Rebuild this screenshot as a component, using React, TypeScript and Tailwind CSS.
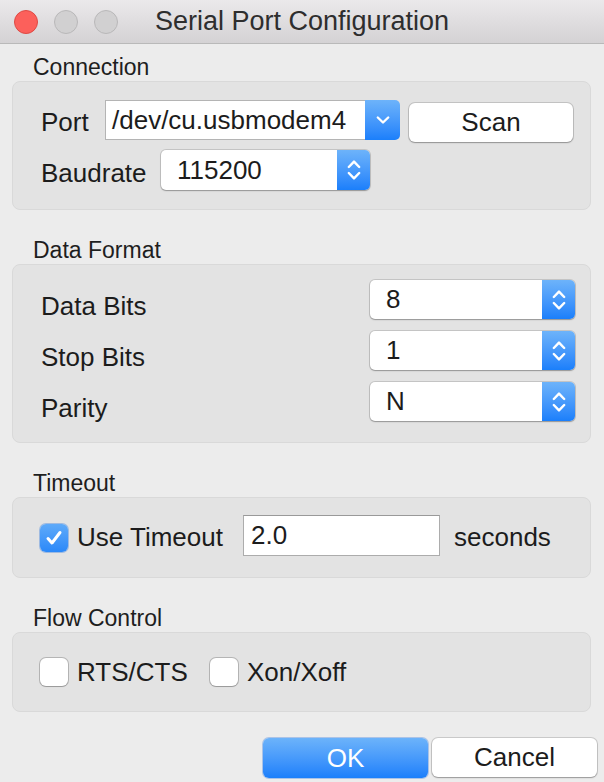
import React from "react";

const UpDown = () => (
  <svg width="14" height="24" viewBox="0 0 14 24" fill="none" stroke="white" strokeWidth="2.4" strokeLinecap="round" strokeLinejoin="round">
    <path d="M1.8 9 L7 3.6 L12.2 9" />
    <path d="M1.8 15 L7 20.4 L12.2 15" />
  </svg>
);

const Down = () => (
  <svg width="14" height="10" viewBox="0 0 14 10" fill="none" stroke="white" strokeWidth="2.4" strokeLinecap="round" strokeLinejoin="round">
    <path d="M1.8 2.5 L7 7.5 L12.2 2.5" />
  </svg>
);

function Popup({ value, w, h }: { value: string; w: string; h: string }) {
  return (
    <div className={`flex ${w} ${h} rounded-[5px] bg-white overflow-hidden shadow-[0_0_0_1px_rgba(0,0,0,0.13),0_1px_1.5px_rgba(0,0,0,0.25)]`}>
      <div className="flex-1 flex items-center pl-[16px] text-[26px] text-[#1c1c1c]">{value}</div>
      <div className="w-[33px] flex items-center justify-center bg-linear-to-b from-[#6db3fa] to-[#1a7ffb]">
        <UpDown />
      </div>
    </div>
  );
}

function Check({ checked }: { checked: boolean }) {
  if (checked) {
    return (
      <div className="w-[28px] h-[28px] rounded-[6px] bg-linear-to-b from-[#5eaaf9] to-[#2a88f9] flex items-center justify-center shadow-[0_0_0_1px_rgba(30,110,220,0.35)]">
        <svg width="20" height="20" viewBox="0 0 20 20" fill="none" stroke="white" strokeWidth="3" strokeLinecap="round" strokeLinejoin="round">
          <path d="M4 10.5 L8 15 L16 4.5" />
        </svg>
      </div>
    );
  }
  return (
    <div className="w-[28px] h-[28px] rounded-[6px] bg-white shadow-[0_0_0_1px_rgba(0,0,0,0.2),0_1px_1px_rgba(0,0,0,0.15)]" />
  );
}

function Button({ label, primary, w }: { label: string; primary?: boolean; w: string }) {
  return primary ? (
    <div className={`${w} h-[40px] rounded-[6px] bg-linear-to-b from-[#6cb3fa] to-[#1a7ffb] text-white text-[26px] flex items-center justify-center shadow-[0_0_0_1px_rgba(20,100,220,0.3)]`}>
      {label}
    </div>
  ) : (
    <div className={`${w} h-[39px] rounded-[6px] bg-white text-[#1c1c1c] text-[26px] flex items-center justify-center shadow-[0_0_0_1px_rgba(0,0,0,0.14),0_1px_1.5px_rgba(0,0,0,0.25)]`}>
      {label}
    </div>
  );
}

function SectionLabel({ children }: { children: React.ReactNode }) {
  return <div className="h-[28px] leading-[28px] pl-[21px] text-[23px] text-[#1e1e1e]">{children}</div>;
}

export default function App() {
  return (
    <div className="w-[604px] h-[782px] bg-[#ececec] flex flex-col overflow-hidden font-['Liberation_Sans',Arial,sans-serif] text-[#1c1c1c]">
      {/* Title bar */}
      <div className="h-[44px] shrink-0 grid grid-cols-[1fr_auto_1fr] items-center border-b border-[#b9b9b9] bg-linear-to-b from-[#ebe9eb] to-[#d4d2d4]">
        <div className="flex items-center gap-[16px] pl-[14px]">
          <div className="w-[24px] h-[24px] rounded-full bg-[#fc605b] border border-[#de4a44]" />
          <div className="w-[24px] h-[24px] rounded-full bg-[#d1d0d1] border border-[#b9b8b9]" />
          <div className="w-[24px] h-[24px] rounded-full bg-[#d1d0d1] border border-[#b9b8b9]" />
        </div>
        <div className="text-[27px] text-[#2e2e2e] leading-none">Serial Port Configuration</div>
        <div />
      </div>

      <div className="flex flex-col pl-[12px] pr-[13px] pt-[9px]">
        {/* Connection */}
        <SectionLabel>Connection</SectionLabel>
        <div className="h-[129px] rounded-[8px] bg-[#e3e3e3] border border-[#d9d9d9] pl-[28px] pt-[18px] flex flex-col">
          <div className="flex items-start">
            <div className="w-[64px] h-[40px] pt-[5px] flex items-center text-[26px]">Port</div>
            <div className="flex h-[40px]">
              <div className="w-[260px] h-[40px] bg-white border border-[#b4b4b4] border-r-0 pl-[6px] flex items-center overflow-hidden whitespace-nowrap text-[26px]">
                /dev/cu.usbmodem4
              </div>
              <div className="w-[35px] h-[40px] rounded-r-[5px] bg-linear-to-b from-[#6db3fa] to-[#1a7ffb] flex items-center justify-center">
                <Down />
              </div>
            </div>
            <div className="ml-[9px] mt-[3px]">
              <Button label="Scan" w="w-[164px]" />
            </div>
          </div>
          <div className="flex items-center mt-[8px]">
            <div className="w-[120px] h-[40px] pt-[6px] flex items-center text-[26px]">Baudrate</div>
            <Popup value="115200" w="w-[209px]" h="h-[40px]" />
          </div>
        </div>

        {/* Data Format */}
        <div className="mt-[26px]">
          <SectionLabel>Data Format</SectionLabel>
        </div>
        <div className="h-[179px] rounded-[8px] bg-[#e3e3e3] border border-[#d9d9d9] pl-[28px] pr-[15px] pt-[15px] flex flex-col gap-[12px]">
          {[
            ["Data Bits", "8"],
            ["Stop Bits", "1"],
            ["Parity", "N"],
          ].map(([l, v]) => (
            <div key={l} className="h-[39px] flex items-center justify-between">
              <div className="text-[26px] leading-none mt-[12px]">{l}</div>
              <Popup value={v} w="w-[205px]" h="h-[39px]" />
            </div>
          ))}
        </div>

        {/* Timeout */}
        <div className="mt-[26px]">
          <SectionLabel>Timeout</SectionLabel>
        </div>
        <div className="h-[81px] rounded-[8px] bg-[#e3e3e3] border border-[#d9d9d9] pl-[27px] flex items-center">
          <Check checked />
          <div className="w-[175px] pl-[9px] text-[26px]">Use Timeout</div>
          <div className="w-[197px] h-[41px] bg-white border border-[#acacac] border-t-[#999999] pl-[7px] flex items-center text-[26px] -mt-[5px]">
            2.0
          </div>
          <div className="ml-[14px] text-[26px]">seconds</div>
        </div>

        {/* Flow Control */}
        <div className="mt-[26px]">
          <SectionLabel>Flow Control</SectionLabel>
        </div>
        <div className="h-[80px] rounded-[8px] bg-[#e3e3e3] border border-[#d9d9d9] pl-[27px] flex items-center">
          <Check checked={false} />
          <div className="w-[142px] pl-[9px] text-[26px]">RTS/CTS</div>
          <Check checked={false} />
          <div className="pl-[9px] text-[26px]">Xon/Xoff</div>
        </div>
      </div>

      {/* Buttons */}
      <div className="flex justify-end gap-[4px] pr-[7px] mt-[26px]">
        <Button label="OK" primary w="w-[165px]" />
        <Button label="Cancel" w="w-[165px]" />
      </div>
    </div>
  );
}
